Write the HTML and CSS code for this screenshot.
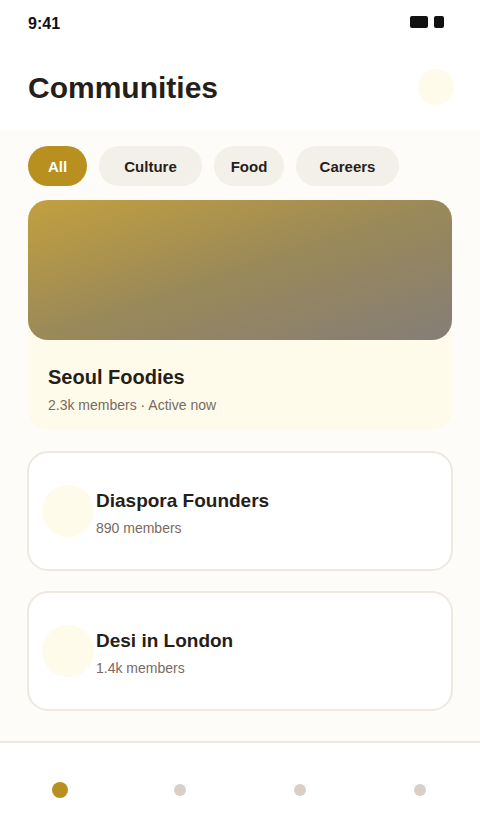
FILE: index.html
```html
<!DOCTYPE html>
<html lang="en">
<head>
<meta charset="utf-8">
<meta name="viewport" content="width=device-width, initial-scale=1">
<title>Communities</title>
<link rel="stylesheet" href="styles.css">
</head>
<body>
<div class="status">
  <span class="status-time">9:41</span>
  <svg class="status-icons" width="34" height="12" viewBox="0 0 34 12" aria-hidden="true">
    <rect width="18" height="12" rx="2"/>
    <rect x="24" width="10" height="12" rx="2"/>
  </svg>
</div>
<header class="header">
  <h1 class="title">Communities</h1>
  <button class="profile" type="button" aria-label="Profile"></button>
</header>
<main class="main">
  <div class="chips">
    <button class="chip chip-active" type="button">All</button>
    <button class="chip" type="button">Culture</button>
    <button class="chip" type="button">Food</button>
    <button class="chip" type="button">Careers</button>
  </div>
  <article class="featured">
    <div class="cover"></div>
    <div class="featured-body">
      <h2 class="featured-name">Seoul Foodies</h2>
      <p class="meta">2.3k members · Active now</p>
    </div>
  </article>
  <div class="list">
    <article class="card">
      <div class="avatar"></div>
      <div class="card-text">
        <h2 class="card-name">Diaspora Founders</h2>
        <p class="meta">890 members</p>
      </div>
    </article>
    <article class="card">
      <div class="avatar"></div>
      <div class="card-text">
        <h2 class="card-name">Desi in London</h2>
        <p class="meta">1.4k members</p>
      </div>
    </article>
  </div>
</main>
<nav class="tabs">
  <a class="tab tab-active" href="#communities" aria-label="Communities"></a>
  <a class="tab" href="#events" aria-label="Events"></a>
  <a class="tab" href="#messages" aria-label="Messages"></a>
  <a class="tab" href="#account" aria-label="Account"></a>
</nav>
</body>
</html>
```
FILE: styles.css
```css
:root {
  --accent: #b89020;
  --cream: #fffbeb;
  --page: #fdfcf8;
  --ink: #261e19;
  --muted: #7a6a60;
  --line: #efe8e0;
}

* {
  box-sizing: border-box;
}

body {
  display: flex;
  flex-direction: column;
  min-height: 100vh;
  margin: 0;
  background: var(--page);
  color: var(--ink);
  font-family: "Liberation Sans", Arial, sans-serif;
}

h1, h2, p {
  margin: 0;
}

.status {
  display: flex;
  justify-content: space-between;
  align-items: flex-start;
  padding: 16px 36px 12px 28px;
  background: #fff;
  color: #111;
}

.status-time {
  font-size: 16px;
  font-weight: 700;
  line-height: 16px;
}

.status-icons {
  display: block;
  fill: #111;
}

.header {
  display: flex;
  justify-content: space-between;
  align-items: center;
  padding: 24px 26px 24px 28px;
  background: #fff;
}

.title {
  padding-top: 2px;
  font-size: 30px;
  line-height: 36px;
}

.profile {
  width: 36px;
  height: 36px;
  padding: 0;
  border: 0;
  border-radius: 50%;
  background: var(--cream);
}

.main {
  padding: 16px 28px 30px;
}

.chips {
  display: grid;
  grid-template-columns: 59px 103px 70px 103px;
  gap: 12px;
  margin-bottom: 14px;
}

.chip {
  height: 40px;
  padding: 2px 0 0;
  border: 0;
  border-radius: 20px;
  background: #f3f0ea;
  color: var(--ink);
  font: 700 15px/20px "Liberation Sans", Arial, sans-serif;
}

.chip-active {
  background: var(--accent);
  color: #fff;
}

.featured {
  border-radius: 20px;
  background: var(--cream);
}

.cover {
  height: 140px;
  border-radius: 20px;
  background: linear-gradient(to bottom right, #c3a03e, #9a8959 50%, #857d78);
}

.featured-body {
  display: grid;
  gap: 6px;
  padding: 25px 20px 15px;
}

.featured-name {
  font-size: 20px;
  line-height: 24px;
}

.meta {
  color: var(--muted);
  font-size: 14px;
  line-height: 20px;
}

.list {
  display: grid;
  gap: 20px;
  margin: 21px -1px 0;
}

.card {
  display: flex;
  align-items: center;
  gap: 2px;
  min-height: 120px;
  padding: 0 13px;
  border: 2px solid var(--line);
  border-radius: 21px;
  background: #fff;
}

.avatar {
  flex: none;
  width: 52px;
  height: 52px;
  border-radius: 50%;
  background: var(--cream);
}

.card-text {
  display: grid;
  gap: 5px;
  padding-top: 5px;
}

.card-name {
  font-size: 19px;
  line-height: 24px;
}

.tabs {
  display: grid;
  flex: 1;
  grid-template-columns: repeat(4, 1fr);
  place-items: center;
  min-height: 96px;
  padding-bottom: 1px;
  border-top: 2px solid var(--line);
  background: #fff;
}

.tab {
  width: 12px;
  height: 12px;
  border-radius: 50%;
  background: #d8cfc6;
}

.tab-active {
  width: 16px;
  height: 16px;
  background: var(--accent);
}
```
